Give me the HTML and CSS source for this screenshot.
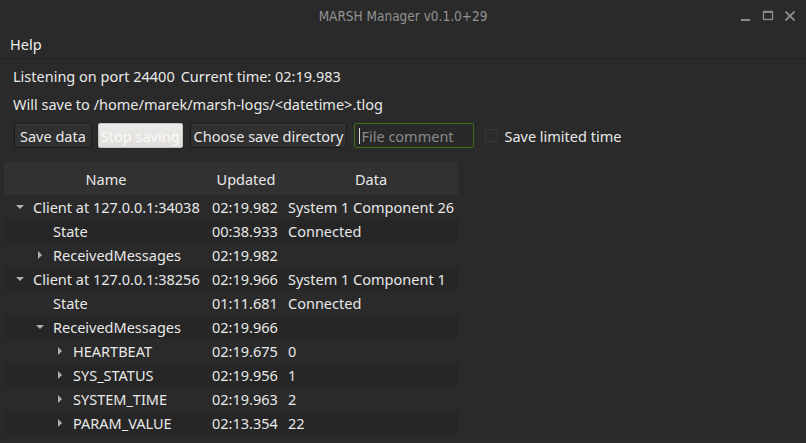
FILE: index.html
```html
<!DOCTYPE html>
<html>
<head>
<meta charset="utf-8">
<link rel="stylesheet" href="styles.css">
</head>
<body>
<div class="window">
  <div class="titlebar">
    <div class="title">MARSH Manager v0.1.0+29</div>
    <div class="controls">
      <svg width="12" height="12" viewBox="0 0 12 12"><rect x="1" y="9" width="9" height="2" fill="#8a8a8a"/></svg>
      <svg width="12" height="12" viewBox="0 0 12 12"><rect x="1.5" y="1.5" width="9" height="8" fill="none" stroke="#8a8a8a" stroke-width="1.4"/><rect x="1" y="1" width="10" height="2" fill="#8a8a8a"/></svg>
      <svg width="12" height="12" viewBox="0 0 12 12"><path d="M1.5 1.5 L10.5 10.5 M10.5 1.5 L1.5 10.5" stroke="#8a8a8a" stroke-width="1.8"/></svg>
    </div>
  </div>
  <div class="menubar"><span class="menu">Help</span></div>
  <div class="content">
    <div class="line"><span>Listening on port 24400</span><span class="gap">Current time: 02:19.983</span></div>
    <div class="line">Will save to /home/marek/marsh-logs/&lt;datetime&gt;.tlog</div>
    <div class="toolbar">
      <button class="btn btn-save">Save data</button>
      <button class="btn btn-light">Stop saving</button>
      <button class="btn btn-dir">Choose save directory</button>
      <div class="input"><span class="caret"></span><span class="placeholder">File comment</span></div>
      <label class="check"><span class="box"></span>Save limited time</label>
    </div>
    <div class="tree">
      <div class="row header"><div class="c name hc">Name</div><div class="c upd hc">Updated</div><div class="c data hc">Data</div></div>
      <div class="row"><div class="c name l0"><span class="arr down"></span>Client at 127.0.0.1:34038</div><div class="c upd">02:19.982</div><div class="c data">System 1 Component 26</div></div>
      <div class="row alt"><div class="c name l1"><span class="arr none"></span>State</div><div class="c upd">00:38.933</div><div class="c data">Connected</div></div>
      <div class="row"><div class="c name l1"><span class="arr right"></span>ReceivedMessages</div><div class="c upd">02:19.982</div><div class="c data"></div></div>
      <div class="row alt"><div class="c name l0"><span class="arr down"></span>Client at 127.0.0.1:38256</div><div class="c upd">02:19.966</div><div class="c data">System 1 Component 1</div></div>
      <div class="row"><div class="c name l1"><span class="arr none"></span>State</div><div class="c upd">01:11.681</div><div class="c data">Connected</div></div>
      <div class="row alt"><div class="c name l1"><span class="arr down"></span>ReceivedMessages</div><div class="c upd">02:19.966</div><div class="c data"></div></div>
      <div class="row"><div class="c name l2"><span class="arr right"></span>HEARTBEAT</div><div class="c upd">02:19.675</div><div class="c data">0</div></div>
      <div class="row alt"><div class="c name l2"><span class="arr right"></span>SYS_STATUS</div><div class="c upd">02:19.956</div><div class="c data">1</div></div>
      <div class="row"><div class="c name l2"><span class="arr right"></span>SYSTEM_TIME</div><div class="c upd">02:19.963</div><div class="c data">2</div></div>
      <div class="row alt"><div class="c name l2"><span class="arr right"></span>PARAM_VALUE</div><div class="c upd">02:13.354</div><div class="c data">22</div></div>
    </div>
  </div>
</div>
</body>
</html>
```
FILE: styles.css
```css
* { box-sizing: border-box; }
html, body { margin: 0; padding: 0; background: #2a2a2a; }
body { width: 806px; height: 443px; overflow: hidden; font-family: "Noto Sans", "Open Sans", sans-serif; font-size: 14.5px; color: #e8e8e8; }
.window { width: 806px; height: 443px; background: #2a2a2a; }
.titlebar { height: 30px; position: relative; display: flex; align-items: center; justify-content: center; background: #2a2a2a; }
.title { font-family: "DejaVu Sans Condensed", "Liberation Sans Narrow", sans-serif; font-size: 13.5px; color: #929292; margin-top: 2px; }
.controls { position: absolute; right: 10px; top: 10px; display: flex; gap: 10px; }
.menubar { height: 29px; display: flex; align-items: center; padding-left: 10px; border-bottom: 1px solid #232323; }
.menu { font-size: 14.5px; color: #ececec; }
.content { padding: 3px 4px 0 4px; }
.line { padding-left: 9px; height: 28px; display: flex; align-items: center; }
.gap { margin-left: 6px; }
.toolbar { display: flex; align-items: center; padding-left: 10px; height: 33px; margin-top: 1px; }
.btn { font-family: inherit; font-size: 14.5px; color: #e8e8e8; background: #303030; border: 1px solid #1c1c1c; border-radius: 2px; height: 25px; padding: 0 4px; margin-right: 7px; box-shadow: inset 0 1px 0 #383838; }
.btn-save { padding: 0 5px; margin-right: 6px; }
.btn-dir { padding: 0 3px; }
.btn-light { background: linear-gradient(#ecebe9, #e0ddda); border-color: #c8c5c1; color: #fbfbfb; box-shadow: none; margin-right: 7px; padding: 0 2px; }
.input { width: 120px; height: 25px; border: 1px solid #3d6e12; border-radius: 2px; display: flex; align-items: center; padding-left: 4px; background: #292929; margin-right: 11px; }
.caret { width: 1px; height: 16px; background: #d8d8d8; margin-right: 1px; }
.placeholder { color: #8a8a8a; }
.check { display: flex; align-items: center; }
.box { width: 13px; height: 13px; border: 1px solid #383838; background: #2b2b2b; margin-right: 6px; }
.tree { width: 454px; margin-top: 10px; }
.row { display: flex; height: 24px; align-items: center; }
.row.header { height: 33px; background: #313131; }
.row.alt { background: #262626; }
.c { white-space: nowrap; }
.name { width: 204px; display: flex; align-items: center; }
.upd { width: 76px; padding-left: 4px; }
.data { flex: 1; padding-left: 4px; }
.hc { justify-content: center; text-align: center; padding-left: 0; }
.l0 { padding-left: 10px; }
.l1 { padding-left: 30px; }
.l2 { padding-left: 50px; }
.arr { width: 19px; height: 10px; position: relative; flex: none; }
.arr.down::before { content: ""; position: absolute; left: 2px; top: 3px; border-left: 4px solid transparent; border-right: 4px solid transparent; border-top: 4px solid #b0b0b0; }
.arr.right::before { content: ""; position: absolute; left: 4px; top: 1px; border-top: 4px solid transparent; border-bottom: 4px solid transparent; border-left: 4px solid #b0b0b0; }
```
